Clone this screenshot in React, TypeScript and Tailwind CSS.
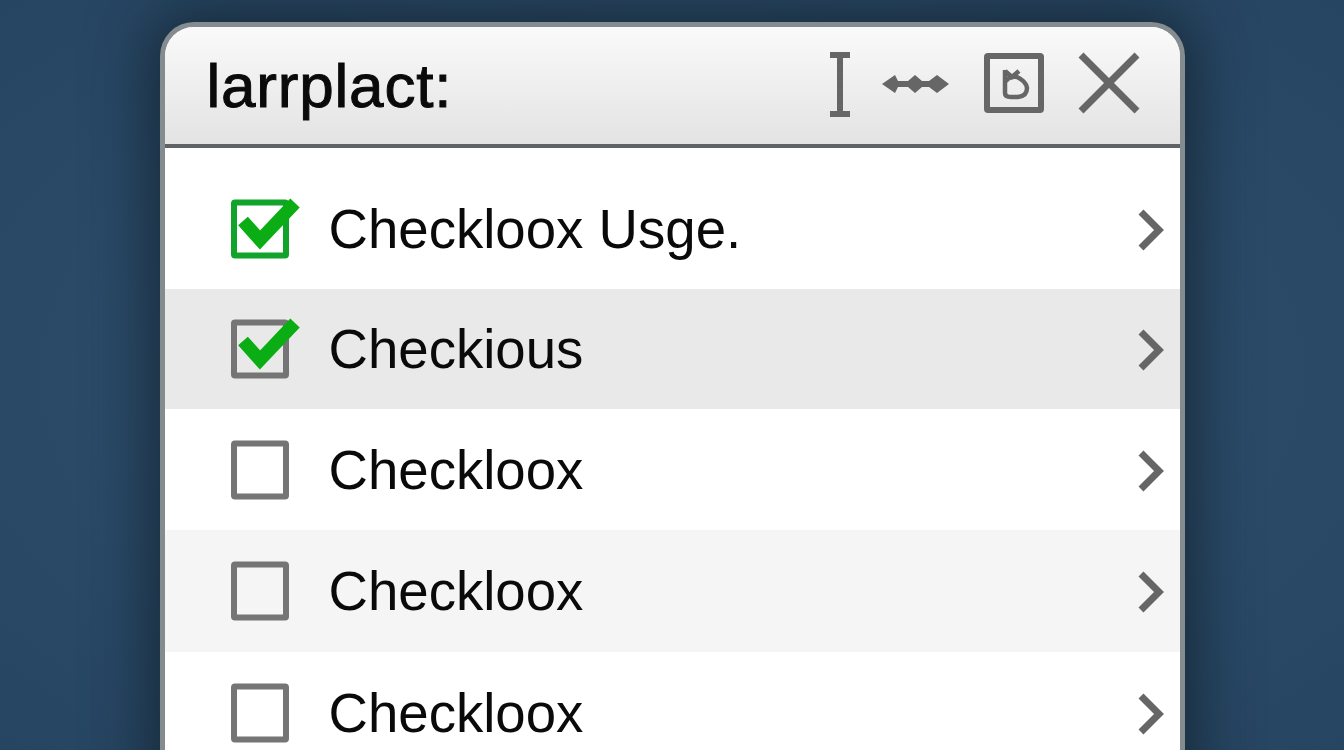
type RowTone = 'white' | 'gray' | 'light';

interface Row {
  label: string;
  tone: RowTone;
  check: 'green' | 'gray' | 'none';
  height: string;
}

const rows: Row[] = [
  { label: 'Checkloox Usge.', tone: 'white', check: 'green', height: 'h-[141px] pt-[23px]' },
  { label: 'Checkious', tone: 'gray', check: 'gray', height: 'h-[120px] pt-[2px]' },
  { label: 'Checkloox', tone: 'white', check: 'none', height: 'h-[121px] pt-[2px]' },
  { label: 'Checkloox', tone: 'light', check: 'none', height: 'h-[122px] pt-[2px]' },
  { label: 'Checkloox', tone: 'white', check: 'none', height: 'h-[122px] pt-[2px]' },
];

function Checkbox({ check }: { check: Row['check'] }) {
  return (
    <svg width="72" height="64" viewBox="0 0 72 64" className="shrink-0">
      <rect
        x="4"
        y="4.5"
        width="52"
        height="53"
        rx="1"
        fill="none"
        stroke={check === 'green' ? '#12a32a' : '#757575'}
        strokeWidth="6"
      />
      {check !== 'none' && <path d="M13 23 L30 42 L65 5" fill="none" stroke="#0aae14" strokeWidth="13" />}
    </svg>
  );
}

function Chevron() {
  return (
    <svg width="30" height="44" viewBox="0 0 30 44" className="shrink-0 text-[#666]">
      <path d="M5 4 L23 22 L5 40" fill="none" stroke="currentColor" strokeWidth="7" />
    </svg>
  );
}

function HeaderIcons() {
  return (
    <div className="flex items-center mb-[5px]">
      <svg width="24" height="65" viewBox="0 0 24 65" className="mt-[2px] mr-[30px] text-[#666]">
        <path d="M2 3 H22 M12 3 V62 M2 62 H22" fill="none" stroke="currentColor" strokeWidth="6" />
      </svg>
      <svg width="68" height="20" viewBox="0 0 68 20" className="mt-[2px] mr-[34px] text-[#666]">
        <path
          d="M0 10 L13 1 L16 7 H26 L33 1 L40 7 H47 L55 1 L67 10 L55 19 L47 13 H40 L33 19 L26 13 H16 L13 19 Z"
          fill="currentColor"
        />
      </svg>
      <svg width="60" height="60" viewBox="0 0 60 60" className="mr-[34px] text-[#666]">
        <rect x="3" y="3" width="54" height="54" rx="1" fill="none" stroke="currentColor" strokeWidth="6" />
        <path
          d="M21 17 V40 Q21 44 27 44 H34 Q43 43 43 35 Q42 28 33 24 Q26 23 22 28 M21 18 L28 24 L35 18"
          fill="none"
          stroke="currentColor"
          strokeWidth="4.5"
        />
      </svg>
      <svg width="62" height="62" viewBox="0 0 62 62" className="text-[#666]">
        <path d="M3 3 L59 59 M59 3 L3 59" fill="none" stroke="currentColor" strokeWidth="7" />
      </svg>
    </div>
  );
}

export default function App() {
  return (
    <div
      className="h-[750px] overflow-hidden flex justify-center pt-[22px] bg-[#2a4a68] bg-[radial-gradient(ellipse_at_center,#2c4c6a_50%,#264562_100%)]"
      style={{ fontFamily: '"Liberation Sans", Arial, sans-serif' }}
    >
      <div className="w-[1025px] h-[800px] shrink-0 rounded-t-[34px] border-[5px] border-b-0 border-[#858c90] bg-white overflow-hidden shadow-[0_0_60px_12px_rgba(15,30,40,0.7)]">
        <div className="h-[121px] border-b-[4px] border-[#5f6366] bg-gradient-to-b from-[#fafafa] to-[#e3e3e3] flex items-center justify-between pl-[42px] pr-[40px]">
          <span className="text-[62px] leading-none text-[#0a0a0a] tracking-[0.8px] [-webkit-text-stroke:1px_#0a0a0a]">
            larrplact:
          </span>
          <HeaderIcons />
        </div>
        {rows.map((row, i) => (
          <div
            key={i}
            className={`${row.height} flex items-center pl-[65px] pr-[14px] ${
              row.tone === 'gray' ? 'bg-[#e9e9e9]' : row.tone === 'light' ? 'bg-[#f5f5f5]' : 'bg-white'
            }`}
          >
            <Checkbox check={row.check} />
            <span className="ml-[27px] text-[54.6px] text-[#0a0a0a] flex-1">{row.label}</span>
            <Chevron />
          </div>
        ))}
      </div>
    </div>
  );
}
